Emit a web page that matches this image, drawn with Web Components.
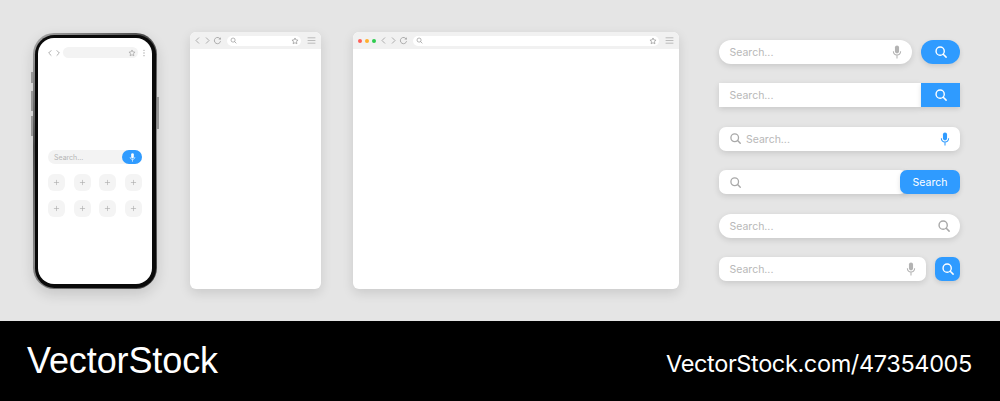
<!DOCTYPE html>
<html>
<head>
<meta charset="utf-8">
<title>Search bars and browser mockups</title>
<style>
  html, body { margin: 0; padding: 0; }
  body { width: 1000px; height: 401px; overflow: hidden; background: #e5e5e5; font-family: 'Inter', 'Liberation Sans', sans-serif; }
</style>
</head>
<body>
<mock-scene>
  <phone-mock></phone-mock>
  <browser-mock style="width:131px"></browser-mock>
  <browser-mock dots style="width:326px"></browser-mock>
  <search-list>
    <search-row shape="pill" trail="mic" button="icon" button-width="39" button-shape="pill" gap="9"></search-row>
    <search-row shape="square" trail="none" button="icon" button-width="39" button-shape="square" gap="0"></search-row>
    <search-row shape="round" lead="search" trail="mic-blue"></search-row>
    <search-row shape="round" lead="search" empty trail="none" button="text" button-width="60" button-shape="round" gap="0" overlap></search-row>
    <search-row shape="pill" trail="search"></search-row>
    <search-row shape="round" trail="mic" button="icon" button-width="25" button-shape="round" gap="9"></search-row>
  </search-list>
</mock-scene>
<brand-footer></brand-footer>

<script>
const ICONS = {
  search: '<circle cx="6.6" cy="6.6" r="4.4" fill="none" stroke="currentColor" stroke-width="1.5"/><path d="M9.9 9.9L13 13" fill="none" stroke="currentColor" stroke-width="1.6" stroke-linecap="round"/>',
  mic: '<rect x="5.3" y="0.5" width="4.4" height="8.5" rx="2.2" fill="currentColor"/><path d="M3.6 6.8c0 2.4 1.7 3.9 3.9 3.9s3.9-1.5 3.9-3.9M7.5 10.7V14.500" fill="none" stroke="currentColor" stroke-width="1.1"/>',
  back: '<path d="M10 2.5L5 7.5l5 5" fill="none" stroke="currentColor" stroke-width="1.5"/>',
  forward: '<path d="M5 2.5l5 5-5 5" fill="none" stroke="currentColor" stroke-width="1.5"/>',
  reload: '<path d="M12.2 5.4A5.2 5.2 0 1 0 12.6 8.6" fill="none" stroke="currentColor" stroke-width="1.5"/><path d="M13 2v4H9z" fill="currentColor"/>',
  star: '<path d="M7.5 1.8l1.7 3.7 4 .5-3 2.7.8 4-3.5-2-3.5 2 .8-4-3-2.7 4-.5z" fill="none" stroke="currentColor" stroke-width="1.4" stroke-linejoin="round"/>',
  menu: '<path d="M1 3h13M1 7.500h13M1 12h13" fill="none" stroke="currentColor" stroke-width="1.400"/>',
  plus: '<path d="M7.500 2v11M2 7.500h11" fill="none" stroke="currentColor" stroke-width="1.300"/>',
  dots: '<circle cx="7.500" cy="2.500" r="1.200" fill="currentColor"/><circle cx="7.500" cy="7.500" r="1.200" fill="currentColor"/><circle cx="7.500" cy="12.500" r="1.200" fill="currentColor"/>'
};

const icon = (name, size, color) =>
  `<svg width="${size}" height="${size}" viewBox="0 0 15 15" style="color:${color};display:block;flex:none">${ICONS[name]}</svg>`;

class MockScene extends HTMLElement {
  constructor() {
    super();
    this.attachShadow({ mode: 'open' });
    this.shadowRoot.innerHTML = `
      <style>
        :host { display: flex; align-items: flex-start; height: 321px; box-sizing: border-box; padding: 32px 0 0 33px; background: #e5e5e5; }
        ::slotted(phone-mock) { margin-right: 33px; }
        ::slotted(browser-mock) { margin-right: 32px; }
        ::slotted(search-list) { margin-left: 8px; }
      </style>
      <slot></slot>`;
  }
}

class PhoneMock extends HTMLElement {
  constructor() {
    super();
    this.attachShadow({ mode: 'open' });
    const tile = `<div class="tile">${icon('plus', 7, '#a9a9a9')}</div>`;
    this.shadowRoot.innerHTML = `
      <style>
        :host { display: block; position: relative; width: 124px; height: 256px; margin-top: 1px; }
        .frame { box-sizing: border-box; height: 100%; padding: 1.5px; border-radius: 21px;
          background: linear-gradient(135deg, #a8a8a8, #4a4a4a 30%, #8a8a8a 60%, #3c3c3c);
          box-shadow: 0 5px 14px rgba(0,0,0,.14); }
        .bezel { box-sizing: border-box; height: 100%; padding: 3.5px; border-radius: 19.5px; background: #0a0a0a; }
        .screen { box-sizing: border-box; height: 100%; border-radius: 16px; background: #fff; padding: 9px 10px 0; display: flex; flex-direction: column; }
        .top { display: flex; align-items: center; height: 11px; }
        .top .nav { display: flex; margin-left: -2px; width: 17px; }
        .url { flex: 1; height: 11px; border-radius: 6px; background: #f3f3f3; display: flex; align-items: center; justify-content: flex-end; padding-right: 2px; }
        .more { width: 9px; display: flex; justify-content: flex-end; margin-right: -6px; margin-left: 1px; }
        .find { display: flex; align-items: center; height: 14px; margin-top: 92px; border-radius: 7px; background: #f3f3f3; font-size: 7px; color: #b5b5b5; padding-left: 6px; }
        .find span { flex: 1; }
        .find .go { width: 20px; height: 14px; border-radius: 7px; background: #2f9bff; display: flex; align-items: center; justify-content: center; }
        .grid { display: grid; grid-template-columns: repeat(4, 17px); justify-content: space-between; row-gap: 9px; margin-top: 10px; }
        .tile { height: 17px; border-radius: 6px; background: #f4f4f4; display: flex; align-items: center; justify-content: center; }
        .btn { position: absolute; background: #989898; }
      </style>
      <div class="btn" style="left:-2px;top:39px;width:2px;height:11px"></div>
      <div class="btn" style="left:-2px;top:58px;width:2px;height:20px"></div>
      <div class="btn" style="left:-2px;top:83px;width:2px;height:20px"></div>
      <div class="btn" style="right:-2px;top:64px;width:2px;height:32px"></div>
      <div class="frame"><div class="bezel"><div class="screen">
        <div class="top">
          <div class="nav">${icon('back', 8, '#9a9a9a')}${icon('forward', 8, '#9a9a9a')}</div>
          <div class="url">${icon('star', 8, '#a5a5a5')}</div>
          <div class="more">${icon('dots', 8, '#a5a5a5')}</div>
        </div>
        <div class="find"><span>Search...</span><div class="go">${icon('mic', 9, '#fff')}</div></div>
        <div class="grid">${tile.repeat(8)}</div>
      </div></div></div>`;
  }
}

class BrowserMock extends HTMLElement {
  constructor() {
    super();
    this.attachShadow({ mode: 'open' });
    const dots = this.hasAttribute('dots') ? `
      <div class="lights"><i style="background:#ff5f57"></i><i style="background:#ffb02e"></i><i style="background:#2ecc4f"></i></div>` : '';
    this.shadowRoot.innerHTML = `
      <style>
        :host { display: block; height: 257px; border-radius: 6px; background: #fff; overflow: hidden; box-shadow: 0 4px 12px rgba(0,0,0,.12); flex: none; }
        .bar { display: flex; align-items: center; height: 17px; box-sizing: border-box; padding: 0 5px 0 3px; background: #f1f1f1; }
        .lights { display: flex; gap: 3px; padding: 0 3px 0 2px; }
        .lights i { display: block; width: 4px; height: 4px; border-radius: 50%; }
        .nav { display: flex; align-items: center; gap: 1px; margin-right: 5px; }
        .url { flex: 1; height: 10px; border-radius: 5px; background: #fff; display: flex; align-items: center; justify-content: space-between; padding: 0 2px 0 3px; }
        .menu { margin-left: 6px; }
      </style>
      <div class="bar">
        ${dots}
        <div class="nav">${icon('back', 9, '#a5a5a5')}${icon('forward', 9, '#a5a5a5')}${icon('reload', 9, '#a5a5a5')}</div>
        <div class="url">${icon('search', 7, '#999')}${icon('star', 8, '#999')}</div>
        <div class="menu">${icon('menu', 9, '#b0b0b0')}</div>
      </div>`;
  }
}

class SearchList extends HTMLElement {
  constructor() {
    super();
    this.attachShadow({ mode: 'open' });
    this.shadowRoot.innerHTML = `
      <style>
        :host { display: flex; flex-direction: column; justify-content: space-between; width: 241px; height: 241px; margin-top: 8px; flex: none; }
      </style>
      <slot></slot>`;
  }
}

class SearchRow extends HTMLElement {
  constructor() {
    super();
    this.attachShadow({ mode: 'open' });
    const radius = { pill: '12px', round: '7px', square: '0' };
    const shape = radius[this.getAttribute('shape')];
    const gap = this.getAttribute('gap') || 0;
    const button = this.getAttribute('button');
    const btnRadius = radius[this.getAttribute('button-shape')];
    const width = this.getAttribute('button-width');
    const lead = this.getAttribute('lead');
    const trail = this.getAttribute('trail');
    const overlap = this.hasAttribute('overlap');

    const trailIcon = {
      mic: icon('mic', 14, '#b3b3b3'),
      'mic-blue': icon('mic', 14, '#2f9bff'),
      search: icon('search', 14, '#a8a8a8'),
      none: ''
    }[trail];

    const btn = !button ? '' : `<div class="btn" style="width:${width}px;border-radius:${btnRadius}">
      ${button === 'text' ? 'Search' : icon('search', 14, '#fff')}</div>`;

    this.shadowRoot.innerHTML = `
      <style>
        :host { display: flex; height: 24px; gap: ${gap}px; }
        .bar { flex: 1; display: flex; align-items: center; background: #fff; border-radius: ${shape}; padding: 0 ${trail === 'search' ? 9 : 8}px 0 ${lead ? 10 : 10.5}px; box-shadow: 0 2px 6px rgba(0,0,0,.13); ${overlap ? 'margin-right: -7px;' : ''} }
        .text { flex: 1; font-size: 10.500px; color: #b8b8b8; padding-top: 1px; }
        .lead { margin: 0 4px 0 0; }
        .btn { flex: none; position: relative; display: flex; align-items: center; justify-content: center; background: #2f9bff; color: #fff; font-size: 10.500px; font-weight: 400; box-shadow: 0 2px 5px rgba(0,0,0,.12); }
      </style>
      <div class="bar">
        ${lead ? `<div class="lead">${icon('search', 13, '#a8a8a8')}</div>` : ''}
        <div class="text">${this.hasAttribute('empty') ? '' : 'Search...'}</div>
        ${trailIcon}
      </div>
      ${btn}`;
  }
}

class BrandFooter extends HTMLElement {
  constructor() {
    super();
    this.attachShadow({ mode: 'open' });
    this.shadowRoot.innerHTML = `
      <style>
        :host { display: flex; align-items: center; justify-content: space-between; height: 80px; box-sizing: border-box; padding: 0 28px 0 27px; background: #000; color: #fff; }
        .logo { font: 36px 'Liberation Sans', sans-serif; letter-spacing: -.1px; }
        .link { font: 23.500px 'Inter', 'Liberation Sans', sans-serif; letter-spacing: -.37px; margin-top: 5px; }
      </style>
      <div class="logo">VectorStock</div>
      <div class="link">VectorStock.com/47354005</div>`;
  }
}

customElements.define('mock-scene', MockScene);
customElements.define('phone-mock', PhoneMock);
customElements.define('browser-mock', BrowserMock);
customElements.define('search-list', SearchList);
customElements.define('search-row', SearchRow);
customElements.define('brand-footer', BrandFooter);
</script>
</body>
</html>
